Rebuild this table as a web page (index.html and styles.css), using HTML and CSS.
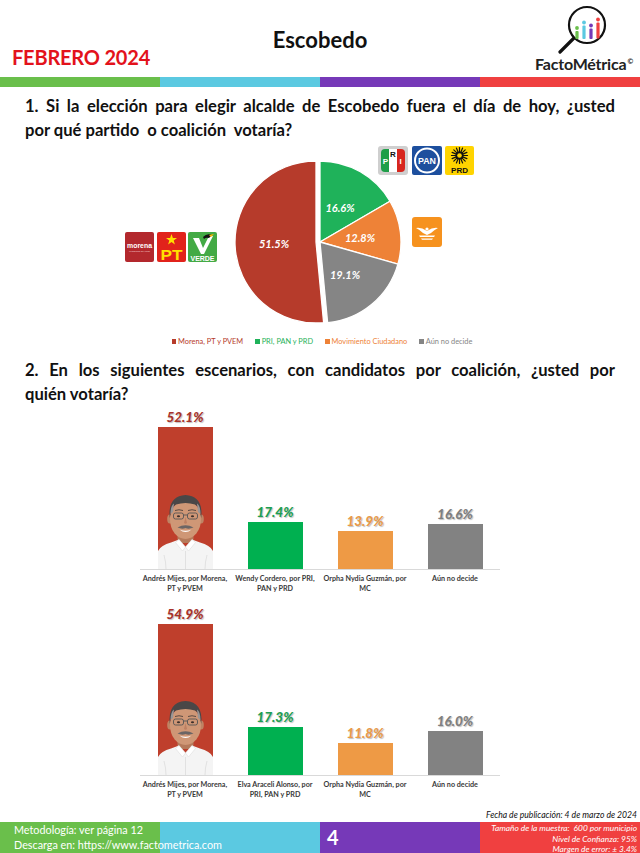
FILE: index.html
```html
<!DOCTYPE html>
<html lang="es">
<head>
<meta charset="utf-8">
<title>Escobedo - FactoMétrica</title>
<link rel="stylesheet" href="styles.css">
</head>
<body>
<div class="page">
  <header class="header">
    <div class="month">FEBRERO 2024</div>
    <div class="title">Escobedo</div>
    <div class="brand">
      <svg class="brand-icon" width="60" height="50" viewBox="0 0 60 50">
        <line x1="19" y1="33" x2="4" y2="48" stroke="#111" stroke-width="3.2" stroke-linecap="round"/>
        <circle cx="31" cy="21" r="18" fill="#fff" stroke="#111" stroke-width="2.2"/>
        <circle cx="21" cy="24" r="1.9" fill="#6abf4b"/>
        <rect x="19.4" y="27" width="3.2" height="8" rx="1" fill="#6abf4b"/>
        <circle cx="28" cy="18.5" r="1.9" fill="#5bc9e1"/>
        <rect x="26.4" y="21.5" width="3.2" height="13.5" rx="1" fill="#5bc9e1"/>
        <circle cx="35" cy="21.5" r="1.9" fill="#7639b8"/>
        <rect x="33.4" y="24.5" width="3.2" height="10.5" rx="1" fill="#7639b8"/>
        <circle cx="42" cy="15.5" r="1.9" fill="#f04040"/>
        <rect x="40.4" y="18.5" width="3.2" height="16" rx="1" fill="#f04040"/>
      </svg>
      <div class="brand-name">FactoMétrica<sup class="copy">©</sup></div>
    </div>
  </header>
  <div class="stripe"></div>

  <section class="question">
    <span class="qline">1. Si la elección para elegir alcalde de Escobedo fuera el día de hoy, ¿usted</span>
    <span class="qlast">por qué partido&nbsp; o coalición&nbsp; votaría?</span>
  </section>

  <svg class="pie" width="640" height="193" viewBox="0 0 640 193">
    <g stroke="#fff" stroke-width="1.3" stroke-linejoin="round">
      <path d="M320,100 L320,19 A81,81 0 0 1 389.98,59.22 Z" fill="#1fb25a"/>
      <path d="M320,100 L389.98,59.22 A81,81 0 0 1 397.92,122.11 Z" fill="#ee8237"/>
      <path d="M320,100 L397.92,122.11 A81,81 0 0 1 327.62,180.64 Z" fill="#858585"/>
      <path d="M316,100 L323.62,180.64 A81,81 0 1 1 316,19 Z" fill="#b63b2b"/>
    </g>
    <g class="pie-label" fill="#fff" text-anchor="middle">
      <text x="340" y="70">16.6%</text>
      <text x="360" y="100">12.8%</text>
      <text x="274" y="106">51.5%</text>
      <text x="345" y="137">19.1%</text>
    </g>

    <!-- PRI -->
    <g>
      <rect x="378" y="4" width="30" height="29" rx="3" fill="#cfcfcf"/>
      <rect x="381" y="7" width="8" height="23" rx="4" fill="#1e9e48"/>
      <rect x="385" y="7" width="4" height="23" fill="#1e9e48"/>
      <rect x="389" y="7" width="8" height="23" fill="#ffffff"/>
      <rect x="397" y="7" width="8" height="23" rx="4" fill="#d7261e"/>
      <rect x="397" y="7" width="4" height="23" fill="#d7261e"/>
      <text class="logo-txt" x="385.5" y="22" font-size="8" fill="#fff" text-anchor="middle">P</text>
      <text class="logo-txt" x="393" y="15" font-size="8" fill="#111" text-anchor="middle">R</text>
      <text class="logo-txt" x="400.5" y="22" font-size="8" fill="#fff" text-anchor="middle">I</text>
    </g>
    <!-- PAN -->
    <g>
      <rect x="412" y="4" width="30" height="29" rx="2" fill="#1d4f9e"/>
      <circle cx="427" cy="18.5" r="12" fill="#1d4f9e" stroke="#fff" stroke-width="2"/>
      <text class="logo-txt" x="427" y="22" font-size="9" fill="#fff" text-anchor="middle" textLength="18" lengthAdjust="spacingAndGlyphs">PAN</text>
    </g>
    <!-- PRD -->
    <g>
      <rect x="445" y="4" width="29" height="29" rx="2" fill="#ffd400"/>
      <g stroke="#111" stroke-width="1.2" stroke-linecap="round">
        <line x1="459.5" y1="5.5" x2="459.5" y2="21.5"/>
        <line x1="451.5" y1="13.5" x2="467.5" y2="13.5"/>
        <line x1="453.8" y1="7.8" x2="465.2" y2="19.2"/>
        <line x1="465.2" y1="7.8" x2="453.8" y2="19.2"/>
        <line x1="456.4" y1="6.1" x2="462.6" y2="20.9"/>
        <line x1="462.6" y1="6.1" x2="456.4" y2="20.9"/>
        <line x1="452.1" y1="10.4" x2="466.9" y2="16.6"/>
        <line x1="466.9" y1="10.4" x2="452.1" y2="16.6"/>
      </g>
      <circle cx="459.5" cy="13.5" r="4" fill="#111"/>
      <circle cx="459.5" cy="13.5" r="2.3" fill="#ffd400"/>
      <text class="logo-txt" x="459.5" y="30.5" font-size="8" fill="#111" text-anchor="middle">PRD</text>
    </g>
    <!-- MC -->
    <g>
      <rect x="412" y="75" width="30" height="30" rx="3" fill="#f6921e"/>
      <path d="M416,86 Q421,85 427,89 Q433,85 438,86 Q434,88 431,91 L427,93 L423,91 Q420,88 416,86 Z" fill="#fff"/>
      <path d="M419,93.5 L435,93.5 L434,95 L420,95 Z" fill="#fff"/>
      <path d="M421,96.5 L433,96.5 L432,97.8 L422,97.8 Z" fill="#fff"/>
      <circle cx="427" cy="87" r="1.6" fill="#fff"/>
    </g>
    <!-- morena -->
    <g>
      <rect x="125" y="90" width="29" height="30" rx="2" fill="#b3282d"/>
      <text class="logo-txt" x="139.5" y="106" font-size="7.4" fill="#fff" text-anchor="middle" textLength="25" lengthAdjust="spacingAndGlyphs">morena</text>
      <text x="139.5" y="110" font-size="2" fill="#f3d0d0" text-anchor="middle" font-family="Lato, sans-serif">La esperanza de México</text>
    </g>
    <!-- PT -->
    <g>
      <rect x="157" y="90" width="29" height="30" rx="2" fill="#e1231b"/>
      <path d="M171.5,92 L172.9,95.9 L177,96 L173.7,98.5 L174.9,102.5 L171.5,100.1 L168.1,102.5 L169.3,98.5 L166,96 L170.1,95.9 Z" fill="#ffe100"/>
      <text class="logo-txt" x="171.5" y="117.5" font-size="15" fill="#ffe100" text-anchor="middle" textLength="22" lengthAdjust="spacingAndGlyphs">PT</text>
    </g>
    <!-- VERDE -->
    <g>
      <rect x="188" y="90" width="29" height="30" rx="2" fill="#43aa45"/>
      <path d="M193,96 L199,96 L203,106 L209,94 L213,94 L204,112 L201,112 Z" fill="#fff"/>
      <path d="M203,95 Q207,91 212,93 L209,96 Q206,95 204,97 Z" fill="#111"/>
      <path d="M209,93 L214,92 L211,95 Z" fill="#ffb400"/>
      <text class="logo-txt" x="202.5" y="118.5" font-size="6.6" fill="#fff" text-anchor="middle" textLength="24" lengthAdjust="spacingAndGlyphs">VERDE</text>
    </g>
  </svg>

  <div class="legend">
    <span class="leg leg-red"><i class="sw"></i>Morena, PT y PVEM</span>
    <span class="leg leg-green"><i class="sw"></i>PRI, PAN y PRD</span>
    <span class="leg leg-orange"><i class="sw"></i>Movimiento Ciudadano</span>
    <span class="leg leg-gray"><i class="sw"></i>Aún no decide</span>
  </div>

  <section class="question q2">
    <span class="qline">2. En los siguientes escenarios, con candidatos por coalición, ¿usted por</span>
    <span class="qlast">quién votaría?</span>
  </section>

  <div class="chart chart1">
    <div class="plot">
      <div class="col">
        <span class="val val-red">52.1%</span>
        <div class="bar bar-red" style="height:142px">
          <svg class="photo" width="55" height="77" viewBox="0 0 55 77">
            <rect x="19.5" y="36" width="16" height="15" fill="#b57a5b"/>
            <path d="M0,77 L0,59 Q3,53 13,50.5 L21,47.5 L27.5,55 L34,47.5 L42,50.5 Q52,53 55,59 L55,77 Z" fill="#f4f4f4"/>
            <path d="M21,47.5 L27.5,55 L24.5,59 L17.5,50.5 Z M34,47.5 L27.5,55 L30.5,59 L37.5,50.5 Z" fill="#ffffff" stroke="#d8d8d8" stroke-width="0.5"/>
            <path d="M6,63 Q8,70 8,77 M49,63 Q47,70 47,77 M27.5,59 L27.5,77" stroke="#dcdcdc" stroke-width="0.8" fill="none"/>
            <ellipse cx="11.8" cy="27" rx="2.6" ry="4.6" fill="#bf8464"/>
            <ellipse cx="43.2" cy="27" rx="2.6" ry="4.6" fill="#bf8464"/>
            <ellipse cx="27.5" cy="27.5" rx="15.5" ry="19.5" fill="#cf9776"/>
            <path d="M11.8,26 Q9.5,4 27.5,3 Q45.5,4 43.2,26 Q42,15 37,12.5 Q27.5,9.5 18,12.5 Q13,15 11.8,26 Z" fill="#4a4747"/>
            <path d="M12.5,22 Q12.5,14 16,11.5 L15,20 Z M42.5,22 Q42.5,14 39,11.5 L40,20 Z" fill="#9a9696"/>
            <path d="M17,18.5 Q21,17 25,18.5 M30,18.5 Q34,17 38,18.5" stroke="#5a4a42" stroke-width="1" fill="none"/>
            <rect x="15.5" y="21" width="10" height="6" rx="2" fill="none" stroke="#555" stroke-width="0.9"/>
            <rect x="29.5" y="21" width="10" height="6" rx="2" fill="none" stroke="#555" stroke-width="0.9"/>
            <line x1="25.5" y1="23" x2="29.5" y2="23" stroke="#555" stroke-width="0.9"/>
            <ellipse cx="20.5" cy="24.2" rx="1.6" ry="1" fill="#3a2e2a"/>
            <ellipse cx="34.5" cy="24.2" rx="1.6" ry="1" fill="#3a2e2a"/>
            <path d="M27.5,25 L26,31 Q27.5,32.5 29,31 Z" fill="#bd8062"/>
            <path d="M19.5,35.5 Q27.5,31 35.5,35.5 Q31,37.5 27.5,36 Q24,37.5 19.5,35.5 Z" fill="#6b6565"/>
            <path d="M21.5,37.5 Q27.5,40 33.5,37.5 Q27.5,42.5 21.5,37.5 Z" fill="#fff"/>
          </svg>
        </div>
      </div>
      <div class="col">
        <span class="val val-green">17.4%</span>
        <div class="bar bar-green" style="height:47px"></div>
      </div>
      <div class="col">
        <span class="val val-orange">13.9%</span>
        <div class="bar bar-orange" style="height:38px"></div>
      </div>
      <div class="col">
        <span class="val val-gray">16.6%</span>
        <div class="bar bar-gray" style="height:45px"></div>
      </div>
    </div>
    <div class="cats">
      <span class="cat">Andrés Mijes, por Morena,<br>PT y PVEM</span>
      <span class="cat">Wendy Cordero, por PRI,<br>PAN y PRD</span>
      <span class="cat">Orpha Nydia Guzmán, por<br>MC</span>
      <span class="cat">Aún no decide</span>
    </div>
  </div>

  <div class="chart chart2">
    <div class="plot">
      <div class="col">
        <span class="val val-red">54.9%</span>
        <div class="bar bar-red" style="height:151px">
          <svg class="photo" width="55" height="77" viewBox="0 0 55 77">
            <rect x="19.5" y="36" width="16" height="15" fill="#b57a5b"/>
            <path d="M0,77 L0,59 Q3,53 13,50.5 L21,47.5 L27.5,55 L34,47.5 L42,50.5 Q52,53 55,59 L55,77 Z" fill="#f4f4f4"/>
            <path d="M21,47.5 L27.5,55 L24.5,59 L17.5,50.5 Z M34,47.5 L27.5,55 L30.5,59 L37.5,50.5 Z" fill="#ffffff" stroke="#d8d8d8" stroke-width="0.5"/>
            <path d="M6,63 Q8,70 8,77 M49,63 Q47,70 47,77 M27.5,59 L27.5,77" stroke="#dcdcdc" stroke-width="0.8" fill="none"/>
            <ellipse cx="11.8" cy="27" rx="2.6" ry="4.6" fill="#bf8464"/>
            <ellipse cx="43.2" cy="27" rx="2.6" ry="4.6" fill="#bf8464"/>
            <ellipse cx="27.5" cy="27.5" rx="15.5" ry="19.5" fill="#cf9776"/>
            <path d="M11.8,26 Q9.5,4 27.5,3 Q45.5,4 43.2,26 Q42,15 37,12.5 Q27.5,9.5 18,12.5 Q13,15 11.8,26 Z" fill="#4a4747"/>
            <path d="M12.5,22 Q12.5,14 16,11.5 L15,20 Z M42.5,22 Q42.5,14 39,11.5 L40,20 Z" fill="#9a9696"/>
            <path d="M17,18.5 Q21,17 25,18.5 M30,18.5 Q34,17 38,18.5" stroke="#5a4a42" stroke-width="1" fill="none"/>
            <rect x="15.5" y="21" width="10" height="6" rx="2" fill="none" stroke="#555" stroke-width="0.9"/>
            <rect x="29.5" y="21" width="10" height="6" rx="2" fill="none" stroke="#555" stroke-width="0.9"/>
            <line x1="25.5" y1="23" x2="29.5" y2="23" stroke="#555" stroke-width="0.9"/>
            <ellipse cx="20.5" cy="24.2" rx="1.6" ry="1" fill="#3a2e2a"/>
            <ellipse cx="34.5" cy="24.2" rx="1.6" ry="1" fill="#3a2e2a"/>
            <path d="M27.5,25 L26,31 Q27.5,32.5 29,31 Z" fill="#bd8062"/>
            <path d="M19.5,35.5 Q27.5,31 35.5,35.5 Q31,37.5 27.5,36 Q24,37.5 19.5,35.5 Z" fill="#6b6565"/>
            <path d="M21.5,37.5 Q27.5,40 33.5,37.5 Q27.5,42.5 21.5,37.5 Z" fill="#fff"/>
          </svg>
        </div>
      </div>
      <div class="col">
        <span class="val val-green">17.3%</span>
        <div class="bar bar-green" style="height:48px"></div>
      </div>
      <div class="col">
        <span class="val val-orange">11.8%</span>
        <div class="bar bar-orange" style="height:32px"></div>
      </div>
      <div class="col">
        <span class="val val-gray">16.0%</span>
        <div class="bar bar-gray" style="height:44px"></div>
      </div>
    </div>
    <div class="cats">
      <span class="cat">Andrés Mijes, por Morena,<br>PT y PVEM</span>
      <span class="cat">Elva Araceli Alonso, por<br>PRI, PAN y PRD</span>
      <span class="cat">Orpha Nydia Guzmán, por<br>MC</span>
      <span class="cat">Aún no decide</span>
    </div>
  </div>

  <div class="pubdate">Fecha de publicación: 4 de marzo de 2024</div>
  <footer class="footer">
    <div class="foot-left">
      <div>Metodología: ver página 12</div>
      <div>Descarga en: https://www.factometrica.com</div>
    </div>
    <div class="foot-page">4</div>
    <div class="foot-right">
      <div>Tamaño de la muestra:&nbsp; 600 por municipio</div>
      <div>Nivel de Confianza: 95%</div>
      <div>Margen de error: ± 3.4%</div>
    </div>
  </footer>
</div>
</body>
</html>
```

FILE: styles.css
```css
* { box-sizing: border-box; }
html, body { margin: 0; padding: 0; background: #fff; }
body { font-family: Lato, "Open Sans", Arial, sans-serif; color: #111; }
.page { width: 640px; height: 853px; overflow: hidden; display: flex; flex-direction: column; }

.header {
  height: 77px;
  display: grid;
  grid-template-columns: 1fr auto 1fr;
}
.month {
  align-self: end;
  padding: 0 0 8px 12px;
  font-size: 20px;
  line-height: 24px;
  font-weight: 700;
  color: #e3121b;
  letter-spacing: -0.2px;
}
.title {
  align-self: start;
  padding-top: 26px;
  font-size: 22px;
  line-height: 28px;
  font-weight: 700;
  color: #111;
}
.brand {
  justify-self: end;
  padding: 4px 7px 0 0;
  display: flex;
  flex-direction: column;
  align-items: center;
}
.brand-icon { display: block; margin-left: 4px; }
.brand-name {
  margin-top: 2px;
  font-size: 16px;
  line-height: 16px;
  font-weight: 700;
  color: #222;
  letter-spacing: -0.2px;
}
.copy { font-size: 7px; vertical-align: top; position: relative; top: -3px; margin-left: 1px; }

.stripe {
  height: 10px;
  background: linear-gradient(to right, #6abf4b 0 25%, #5bc9e1 25% 50%, #7639b8 50% 75%, #f04040 75% 100%);
}

.question {
  margin-top: 7px;
  padding: 0 25px;
  font-size: 16.6px;
  line-height: 24px;
  font-weight: 700;
  color: #111;
}
.qline { display: block; text-align: justify; text-align-last: justify; white-space: nowrap; }
.qlast { display: block; }
.q2 { margin-top: 10px; }

.pie { display: block; }
.pie-label text { font-family: Lato, sans-serif; font-size: 11px; font-style: italic; font-weight: 700; }
.logo-txt { font-family: "Liberation Sans", Arial, sans-serif; font-weight: 700; }

.legend {
  height: 13px;
  display: flex;
  justify-content: center;
  align-items: center;
  gap: 12px;
  padding-left: 4px;
  font-size: 7.4px;
}
.leg { display: flex; align-items: center; white-space: nowrap; }
.sw { display: inline-block; width: 4.5px; height: 4.5px; margin-right: 2px; }
.leg-red { color: #b63b2b; } .leg-red .sw { background: #b63b2b; }
.leg-green { color: #1fb25a; } .leg-green .sw { background: #1fb25a; }
.leg-orange { color: #ee8237; } .leg-orange .sw { background: #ee8237; }
.leg-gray { color: #858585; } .leg-gray .sw { background: #858585; }

.chart { padding-left: 140px; }
.plot {
  width: 360px;
  display: flex;
  align-items: flex-end;
  border-bottom: 1px solid #d9d9d9;
}
.chart1 .plot { height: 164px; }
.chart2 { margin-top: 11px; }
.chart2 .plot { height: 171px; }
.col {
  width: 90px;
  display: flex;
  flex-direction: column;
  align-items: center;
}
.val {
  font-size: 13.5px;
  line-height: 15px;
  font-weight: 900;
  font-style: italic;
  margin-bottom: 2px;
  text-shadow: 1px 1px 1px rgba(0,0,0,0.25);
}
.val-red { color: #a8332a; }
.val-green { color: #1d9e52; }
.val-orange { color: #e89a4a; }
.val-gray { color: #7f7f7f; }
.bar { width: 55px; display: flex; flex-direction: column; justify-content: flex-end; }
.bar-red { background: #bf3f2c; }
.bar-green { background: #00b050; }
.bar-orange { background: #ee9a45; }
.bar-gray { background: #828282; }
.photo { display: block; }

.cats { width: 360px; display: flex; margin-top: 4px; }
.cat {
  width: 90px;
  text-align: center;
  font-size: 7.2px;
  line-height: 10px;
  font-weight: 700;
  color: #3a3a3a;
  white-space: nowrap;
}

.pubdate {
  margin-top: auto;
  padding-right: 3px;
  text-align: right;
  font-size: 8.6px;
  line-height: 12px;
  font-style: italic;
  color: #111;
}
.footer {
  height: 31px;
  margin-top: 1px;
  display: flex;
  color: #fff;
  background: linear-gradient(to right, #6abf4b 0 25%, #5bc9e1 25% 50%, #7639b8 50% 75%, #f04040 75% 100%);
}
.foot-left {
  width: 320px;
  padding: 0 0 0 14px;
  font-size: 10.8px;
  line-height: 15px;
}
.foot-page {
  padding-left: 7px;
  font-size: 20px;
  font-weight: 700;
  line-height: 31px;
}
.foot-right {
  margin-left: auto;
  padding: 1px 3px 0 0;
  text-align: right;
  font-size: 8.4px;
  line-height: 10.5px;
  font-style: italic;
  white-space: nowrap;
}
```
